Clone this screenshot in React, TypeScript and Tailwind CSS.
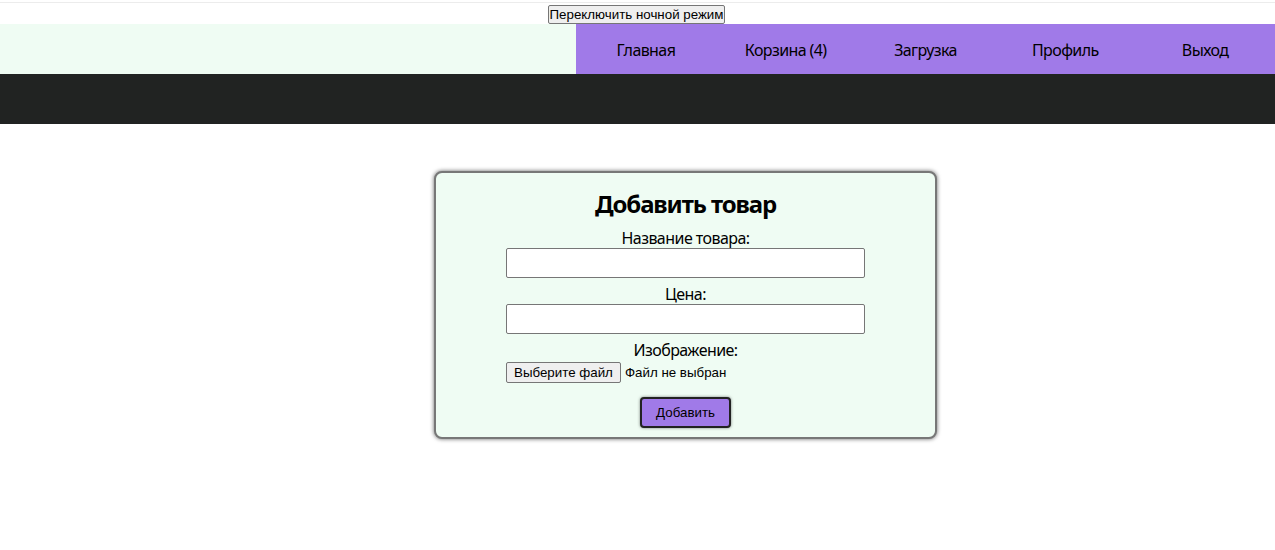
import React from "react";

export default function App() {
  const nav = ["Главная", "Корзина (4)", "Загрузка", "Профиль", "Выход"];
  return (
    <div className="min-h-[550px] bg-white">
      <div className="pt-[2px]">
        <div className="h-px bg-[#ececec]" />
      </div>
      <div className="flex justify-center pt-[2px] pr-[2px]">
        <button className="h-[19px] px-[1px] border border-[#767676] rounded-[2px] bg-[#efefef] text-[13.33px] leading-[16px] text-black [font-family:'Liberation_Sans',Arial,sans-serif]">
          Переключить ночной режим
        </button>
      </div>
      <div className="flex h-[50px] bg-[#effcf3] [font-family:'Noto_Sans',sans-serif]">
        <div className="flex-1" />
        <div className="flex w-[699px] bg-[#a07ae8]">
          {nav.map((n) => (
            <div key={n} className="w-[140px] flex items-center justify-center text-[16px] text-black tracking-[-0.6px] pt-[2px]">
              {n}
            </div>
          ))}
        </div>
      </div>
      <div className="h-[50px] bg-[#212322]" />
      <div className="flex justify-center pt-[47px] pl-[96px]">
        <div className="w-[503px] border-2 border-[#777777] rounded-[8px] bg-[#effcf3] shadow-[0_0_4px_rgba(0,0,0,0.6)] pt-[15px] pb-[9px] flex flex-col items-center [font-family:'Noto_Sans',sans-serif] text-black">
          <h2 className="text-[24px] leading-[32px] font-bold tracking-[-1.1px]">Добавить товар</h2>
          <div className="mt-[9px] text-[16px] leading-[19px] tracking-[-0.55px]">Название товара:</div>
          <input className="w-[359px] h-[30px] border border-[#767676] rounded-[2px] bg-white" />
          <div className="mt-[7px] text-[16px] leading-[19px] tracking-[-0.55px]">Цена:</div>
          <input className="w-[359px] h-[30px] border border-[#767676] rounded-[2px] bg-white" />
          <div className="mt-[7px] text-[16px] leading-[19px] tracking-[-0.55px]">Изображение:</div>
          <div className="w-[359px] mt-[2px] flex items-center [font-family:'Liberation_Sans',Arial,sans-serif] text-[13.33px]">
            <button className="h-[21px] px-[7px] border border-[#767676] rounded-[2px] bg-[#efefef] leading-[16px]">
              Выберите файл
            </button>
            <span className="ml-[4px]">Файл не выбран</span>
          </div>
          <button className="mt-[14px] w-[91px] h-[31px] border-2 border-[#222] rounded-[4px] bg-[#a07ae8] shadow-[0_0_3px_rgba(0,0,0,0.5)] text-[13.33px] [font-family:'Liberation_Sans',Arial,sans-serif]">
            Добавить
          </button>
        </div>
      </div>
    </div>
  );
}
